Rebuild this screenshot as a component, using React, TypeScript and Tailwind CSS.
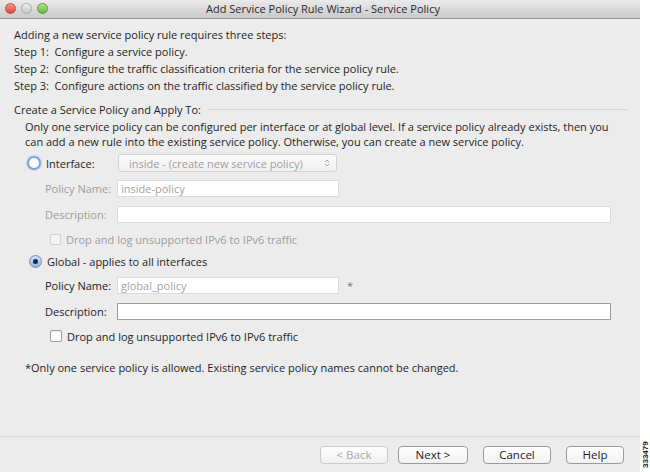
import { useState } from "react";

const font = { fontFamily: '"Open Sans", "DejaVu Sans", sans-serif' };

function Radio({ checked }: { checked: boolean }) {
  return (
    <span
      className={
        checked
          ? "flex h-[13px] w-[13px] items-center justify-center rounded-full border border-[#6f8fc0] bg-gradient-to-b from-[#cfe1f8] to-[#8db5e8]"
          : "flex h-[14px] w-[14px] items-center justify-center rounded-full border-2 border-[#7fa6dc] bg-white shadow-[0_0_2px_#8ab0e6]"
      }
    >
      {checked && <span className="h-[5px] w-[5px] rounded-full bg-[#1d2a3c]" />}
    </span>
  );
}

function Checkbox({ disabled }: { disabled?: boolean }) {
  return (
    <span
      className={
        disabled
          ? "h-[11px] w-[11px] rounded-[2px] border border-[#d0d0d0] bg-[#f4f4f4]"
          : "h-[12px] w-[12px] rounded-[2px] border border-[#9a9a9a] bg-white shadow-[inset_0_1px_1px_rgba(0,0,0,0.08)]"
      }
    />
  );
}

function Field({
  label,
  value,
  wide,
  disabled,
  focused,
  star,
}: {
  label: string;
  value?: string;
  wide?: boolean;
  disabled?: boolean;
  focused?: boolean;
  star?: boolean;
}) {
  return (
    <div className="flex h-[26px] items-center pl-[45px]">
      <span className={`w-[72px] ${disabled ? "text-[#9d9d9d]" : "text-[#222]"}`}>{label}</span>
      <div
        className={`flex h-[17px] items-center bg-white px-[3px] ${wide ? "w-[494px]" : "w-[222px]"} ${
          focused ? "border border-[#9c9c9c]" : "border border-[#dcdcdc]"
        }`}
      >
        <span className="text-[#a3a3a3]">{value}</span>
      </div>
      {star && <span className="ml-[8px] text-[#777]">*</span>}
    </div>
  );
}

function Button({ label, width, disabled }: { label: string; width: string; disabled?: boolean }) {
  return (
    <button
      className={`h-[18px] rounded-[4px] border bg-gradient-to-b from-white to-[#f1f1f1] text-center text-[11.5px] leading-none ${width} ${
        disabled ? "border-[#cacaca] text-[#a8a8a8]" : "border-[#9b9b9b] text-[#1a1a1a]"
      }`}
    >
      {label}
    </button>
  );
}

export default function App() {
  const [mode] = useState<"interface" | "global">("global");

  return (
    <div className="flex h-[472px] w-[650px] bg-white text-[11px] text-[#1e1e1e]" style={font}>
      <div className="flex w-[640px] flex-col bg-[#ececec]">
        <div className="relative flex h-[19px] shrink-0 items-center justify-center border-b border-[#9a9a9a] bg-gradient-to-b from-[#ebebeb] to-[#c9c9c9]">
          <div className="absolute left-[5px] top-[3px] flex gap-[5px]">
            <span className="h-[11px] w-[11px] rounded-full border border-[#c24a44] bg-gradient-to-b from-[#f3948d] to-[#e0423a]" />
            <span className="h-[11px] w-[11px] rounded-full border border-[#a7a7a7] bg-gradient-to-b from-[#f0f0f0] to-[#c7c7c7]" />
            <span className="h-[11px] w-[11px] rounded-full border border-[#5b9a3e] bg-gradient-to-b from-[#b6e38f] to-[#65b83d]" />
          </div>
          <span className="pl-[6px] text-[11px] text-[#2a2a2a]">Add Service Policy Rule Wizard - Service Policy</span>
        </div>

        <div className="flex flex-1 flex-col pl-[14px] pt-[7px] leading-[17px]">
          <p>Adding a new service policy rule requires three steps:</p>
          <p>Step 1:&nbsp; Configure a service policy.</p>
          <p>Step 2:&nbsp; Configure the traffic classification criteria for the service policy rule.</p>
          <p>Step 3:&nbsp; Configure actions on the traffic classified by the service policy rule.</p>

          <div className="mt-[7px] flex items-center gap-[7px] pr-[12px]">
            <span>Create a Service Policy and Apply To:</span>
            <span className="h-px flex-1 bg-[#d6d6d6]" />
          </div>
          <p className="pl-[11px] pr-[16px] pt-[1px] leading-[15px]">
            Only one service policy can be configured per interface or at global level. If a service policy already exists, then you
            can add a new rule into the existing service policy. Otherwise, you can create a new service policy.
          </p>

          <div className="-ml-[14px] flex flex-col">
            <div className="mt-[4px] flex h-[20px] items-center pl-[27px]">
              <Radio checked={mode === "interface"} />
              <span className="ml-[5px] w-[72px]">Interface:</span>
              <div className="flex h-[18px] w-[219px] items-center justify-between rounded-[3px] border border-[#d2d2d2] bg-gradient-to-b from-[#fbfbfb] to-[#f0f0f0] pl-[10px] pr-[6px] text-[#a0a0a0]">
                <span>inside - (create new service policy)</span>
                <svg width="6" height="10" viewBox="0 0 6 10" className="text-[#a8a8a8]">
                  <path d="M1 4 L3 2 L5 4" fill="none" stroke="currentColor" strokeWidth="1" />
                  <path d="M1 6 L3 8 L5 6" fill="none" stroke="currentColor" strokeWidth="1" />
                </svg>
              </div>
            </div>
            <div className="mt-[2px]">
              <Field label="Policy Name:" value="inside-policy" disabled />
              <Field label="Description:" wide disabled />
            </div>
            <div className="flex h-[24px] items-center gap-[5px] pl-[50px] text-[#9d9d9d]">
              <Checkbox disabled />
              <span>Drop and log unsupported IPv6 to IPv6 traffic</span>
            </div>
            <div className="flex h-[20px] items-center gap-[5px] pl-[29px]">
              <Radio checked={mode === "global"} />
              <span>Global - applies to all interfaces</span>
            </div>
            <div className="mt-[1px]">
              <Field label="Policy Name:" value="global_policy" star />
              <Field label="Description:" wide focused />
            </div>
            <div className="flex h-[24px] items-center gap-[5px] pl-[50px]">
              <Checkbox />
              <span>Drop and log unsupported IPv6 to IPv6 traffic</span>
            </div>
            <p className="mt-[11px] pl-[25px]">
              *Only one service policy is allowed. Existing service policy names cannot be changed.
            </p>
          </div>
        </div>

        <div className="flex h-[36px] shrink-0 items-center justify-end border-t border-[#d8d8d8] pr-[16px]">
          <Button label="< Back" width="w-[68px]" disabled />
          <div className="ml-[10px] flex gap-[15px]">
            <Button label="Next >" width="w-[70px]" />
            <Button label="Cancel" width="w-[68px]" />
            <Button label="Help" width="w-[58px]" />
          </div>
        </div>
      </div>
      <div className="relative flex-1">
        <span
          className="absolute bottom-[4px] left-[1px] origin-bottom-left translate-x-[9px] -rotate-90 text-[8px] font-bold leading-none text-[#222]"
          style={{ fontFamily: '"Liberation Sans Narrow", "Liberation Sans", sans-serif' }}
        >
          333479
        </span>
      </div>
    </div>
  );
}
